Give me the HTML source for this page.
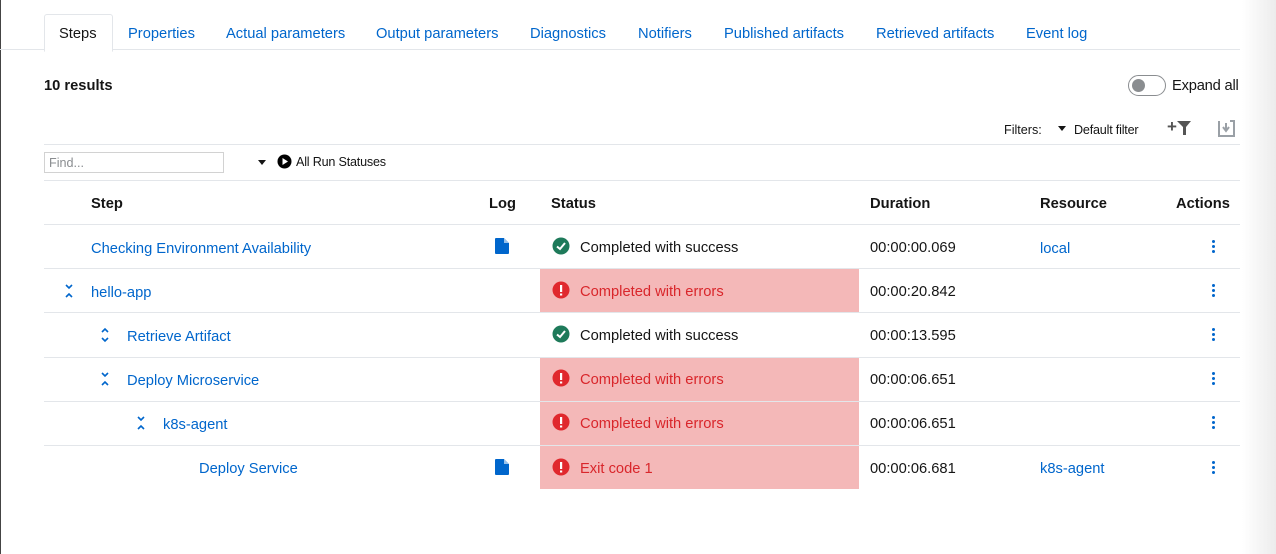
<!DOCTYPE html><html><head><style>
body{margin:0;width:1276px;height:554px;background:#fff;font-family:"Liberation Sans",sans-serif;font-size:14.7px;color:#151515;position:relative;overflow:hidden}
.a{position:absolute;white-space:nowrap}
.t{padding-top:2px}
.b{color:#0066cc}
.tabline{position:absolute;left:0;top:49px;width:1240px;height:1px;background:#e3e6ea}
.tab{position:absolute;top:14px;left:44px;width:67px;height:36px;border:1px solid #e3e6ea;border-bottom:1px solid #fff;border-radius:3px 3px 0 0;background:#fff}
.hl{position:absolute;left:44px;width:1196px;height:1px;background:#e3e6ea}
.err{position:absolute;left:540px;width:319px;height:43px;background:#f4b8b8}
.r{color:#d9262b}
.dots{position:absolute;left:1212px;width:4px}
.dots i{display:block;width:3px;height:3px;background:#0066cc;border-radius:50%;margin-bottom:2px}
.shade{position:absolute;right:0;top:0;width:34px;height:554px;background:linear-gradient(90deg,rgba(255,255,255,0),#ececec)}
.sm{font-size:12.6px}
</style></head><body>
<div style="position:absolute;left:0;top:0;width:1px;height:554px;background:#444"></div>
<div class="tabline"></div><div class="tab"></div>
<div class="a t" style="left:59px;top:24px">Steps</div>
<div class="a t b" style="left:128px;top:24px">Properties</div>
<div class="a t b" style="left:226px;top:24px">Actual parameters</div>
<div class="a t b" style="left:376px;top:24px">Output parameters</div>
<div class="a t b" style="left:530px;top:24px">Diagnostics</div>
<div class="a t b" style="left:638px;top:24px">Notifiers</div>
<div class="a t b" style="left:724px;top:24px">Published artifacts</div>
<div class="a t b" style="left:876px;top:24px">Retrieved artifacts</div>
<div class="a t b" style="left:1026px;top:24px">Event log</div>
<div class="a t" style="left:44px;top:76px;font-weight:bold">10 results</div>
<div class="a" style="left:1128px;top:75px;width:36px;height:19px;border:1px solid #8a8d90;border-radius:11px"></div>
<div class="a" style="left:1132px;top:79px;width:13px;height:13px;border-radius:50%;background:#8a8d90"></div>
<div class="a t" style="left:1172px;top:76px;letter-spacing:-0.2px">Expand all</div>
<div class="a t sm" style="left:1004px;top:121px">Filters:</div>
<div class="a" style="left:1058px;top:126px;border:4px solid transparent;border-top:5px solid #151515"></div>
<div class="a t sm" style="left:1074px;top:121px;letter-spacing:-0.2px">Default filter</div>
<div class="a" style="left:1167px;top:117px;font-size:17px;font-weight:bold;color:#555">+</div>
<svg class="a" style="left:1177px;top:121px" width="15" height="14"><path d="M0 0H14L9 6V14H6V6Z" fill="#555"/></svg>
<svg class="a" style="left:1218px;top:120px" width="18" height="17"><path d="M1 1V16H16V1H12" fill="none" stroke="#9aa0a6" stroke-width="2"/><path d="M8 3V10M5 7L8 11L11 7" fill="none" stroke="#9aa0a6" stroke-width="2"/></svg>
<div class="hl" style="top:144px"></div>
<div class="a" style="left:44px;top:152px;width:178px;height:19px;border:1px solid #d2d2d2"></div>
<div class="a t sm" style="left:49px;top:154px;color:#8a8d90">Find...</div>
<div class="a" style="left:258px;top:160px;border:4px solid transparent;border-top:5px solid #151515"></div>
<svg class="a" style="left:277px;top:154px" width="15" height="15"><circle cx="7.5" cy="7.5" r="7" fill="#000"/><path d="M5.5 4V11L11 7.5Z" fill="#fff"/></svg>
<div class="a t sm" style="left:296px;top:153px;letter-spacing:-0.2px">All Run Statuses</div>
<div class="hl" style="top:180px"></div>
<div class="a t" style="left:91px;top:194px;font-weight:bold">Step</div>
<div class="a t" style="left:489px;top:194px;font-weight:bold">Log</div>
<div class="a t" style="left:551px;top:194px;font-weight:bold">Status</div>
<div class="a t" style="left:870px;top:194px;font-weight:bold">Duration</div>
<div class="a t" style="left:1040px;top:194px;font-weight:bold">Resource</div>
<div class="a t" style="left:1176px;top:194px;font-weight:bold">Actions</div>
<div class="hl" style="top:224px"></div>
<div class="hl" style="top:268px"></div>
<div class="hl" style="top:312px"></div>
<div class="hl" style="top:357px"></div>
<div class="hl" style="top:401px"></div>
<div class="hl" style="top:445px"></div>
<div class="err" style="top:269px"></div>
<div class="err" style="top:358px"></div>
<div class="err" style="top:402px"></div>
<div class="err" style="top:446px"></div>

<div class="a t b" style="left:91px;top:239px">Checking Environment Availability</div>
<svg class="a" style="left:494px;top:237px" width="16" height="18"><path d="M1 2Q1 1 2 1H10L15 6V16Q15 17 14 17H2Q1 17 1 16Z" fill="#0066cc"/><path d="M10 1V6H15" fill="#fff" opacity=".6"/></svg>
<svg class="a" style="left:552px;top:237px" width="18" height="18"><circle cx="9" cy="9" r="8.5" fill="#1e7a5a"/><path d="M5 9.5L8 12L13 6" fill="none" stroke="#fff" stroke-width="2"/></svg>
<div class="a t" style="left:580px;top:238px">Completed with success</div>
<div class="a t" style="left:870px;top:238px">00:00:00.069</div>
<div class="a t b" style="left:1040px;top:239px">local</div>
<div class="dots" style="top:240px"><i></i><i></i><i></i></div>

<svg class="a" style="left:64px;top:283px" width="10" height="16"><path d="M2 2L5 5L8 2M2 14L5 11L8 14" fill="none" stroke="#0066cc" stroke-width="1.6"/></svg>
<div class="a t b" style="left:91px;top:283px">hello-app</div>
<svg class="a" style="left:552px;top:281px" width="18" height="18"><circle cx="9" cy="9" r="8.5" fill="#e0282d"/><rect x="8" y="4" width="2.2" height="7" fill="#fff"/><rect x="8" y="12.5" width="2.2" height="2" fill="#fff"/></svg>
<div class="a t r" style="left:580px;top:282px">Completed with errors</div>
<div class="a t" style="left:870px;top:282px">00:00:20.842</div>
<div class="dots" style="top:284px"><i></i><i></i><i></i></div>

<svg class="a" style="left:100px;top:327px" width="10" height="16"><path d="M2 5L5 2L8 5M2 11L5 14L8 11" fill="none" stroke="#0066cc" stroke-width="1.6"/></svg>
<div class="a t b" style="left:127px;top:327px">Retrieve Artifact</div>
<svg class="a" style="left:552px;top:325px" width="18" height="18"><circle cx="9" cy="9" r="8.5" fill="#1e7a5a"/><path d="M5 9.5L8 12L13 6" fill="none" stroke="#fff" stroke-width="2"/></svg>
<div class="a t" style="left:580px;top:326px">Completed with success</div>
<div class="a t" style="left:870px;top:326px">00:00:13.595</div>
<div class="dots" style="top:328px"><i></i><i></i><i></i></div>

<svg class="a" style="left:100px;top:371px" width="10" height="16"><path d="M2 2L5 5L8 2M2 14L5 11L8 14" fill="none" stroke="#0066cc" stroke-width="1.6"/></svg>
<div class="a t b" style="left:127px;top:371px">Deploy Microservice</div>
<svg class="a" style="left:552px;top:369px" width="18" height="18"><circle cx="9" cy="9" r="8.5" fill="#e0282d"/><rect x="8" y="4" width="2.2" height="7" fill="#fff"/><rect x="8" y="12.5" width="2.2" height="2" fill="#fff"/></svg>
<div class="a t r" style="left:580px;top:370px">Completed with errors</div>
<div class="a t" style="left:870px;top:370px">00:00:06.651</div>
<div class="dots" style="top:372px"><i></i><i></i><i></i></div>

<svg class="a" style="left:136px;top:415px" width="10" height="16"><path d="M2 2L5 5L8 2M2 14L5 11L8 14" fill="none" stroke="#0066cc" stroke-width="1.6"/></svg>
<div class="a t b" style="left:163px;top:415px">k8s-agent</div>
<svg class="a" style="left:552px;top:413px" width="18" height="18"><circle cx="9" cy="9" r="8.5" fill="#e0282d"/><rect x="8" y="4" width="2.2" height="7" fill="#fff"/><rect x="8" y="12.5" width="2.2" height="2" fill="#fff"/></svg>
<div class="a t r" style="left:580px;top:414px">Completed with errors</div>
<div class="a t" style="left:870px;top:414px">00:00:06.651</div>
<div class="dots" style="top:416px"><i></i><i></i><i></i></div>

<div class="a t b" style="left:199px;top:459px">Deploy Service</div>
<svg class="a" style="left:494px;top:458px" width="16" height="18"><path d="M1 2Q1 1 2 1H10L15 6V16Q15 17 14 17H2Q1 17 1 16Z" fill="#0066cc"/><path d="M10 1V6H15" fill="#fff" opacity=".6"/></svg>
<svg class="a" style="left:552px;top:458px" width="18" height="18"><circle cx="9" cy="9" r="8.5" fill="#e0282d"/><rect x="8" y="4" width="2.2" height="7" fill="#fff"/><rect x="8" y="12.5" width="2.2" height="2" fill="#fff"/></svg>
<div class="a t r" style="left:580px;top:459px">Exit code 1</div>
<div class="a t" style="left:870px;top:459px">00:00:06.681</div>
<div class="a t b" style="left:1040px;top:459px">k8s-agent</div>
<div class="dots" style="top:461px"><i></i><i></i><i></i></div>
<div class="shade"></div>
</body></html>
